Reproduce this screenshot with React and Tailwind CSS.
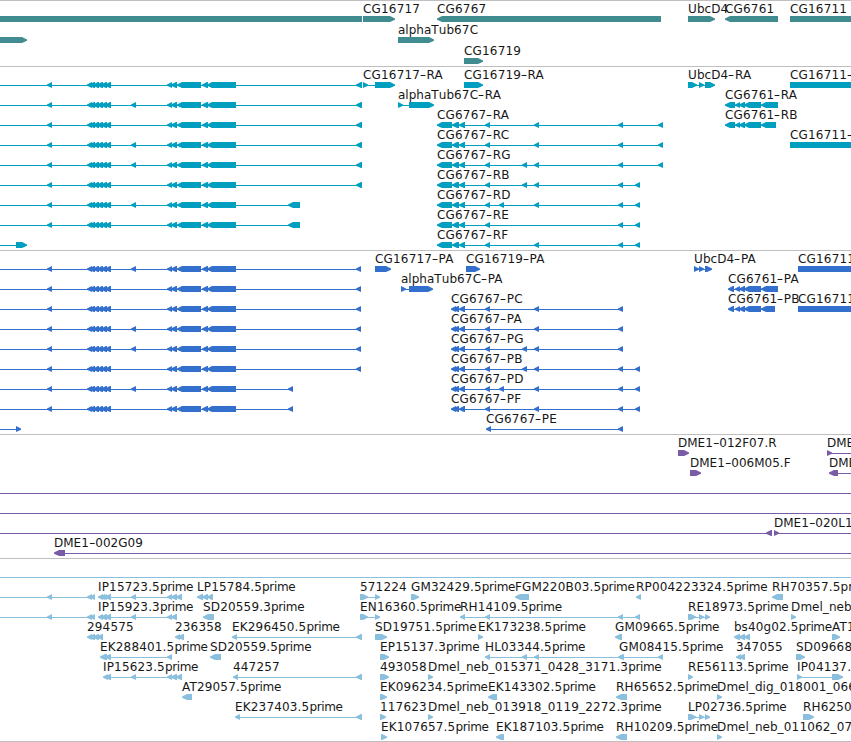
import clsx from "clsx";

// every feature is [direction, exons, label]. exons are [start, end] in px,
// a line is drawn behind them from the first start to the last end
const EDGE = 870;

const intronLine = [-20, EDGE];

// the big gene on the left that runs off the screen
const leftGene = (extraExon, end) => [
    "l",
    [
        [-20, -12], [47, 52],
        [87, 92], [89, 95], [93, 99], [97, 103], [101, 107], [105, 111],
        ...(extraExon ? [[131, 136]] : []),
        [167, 172], [171, 177], [177, 201], [202, 208], [207, 236],
        end,
    ],
];

const cg6767R = (name, rest) => [
    "l",
    [[437, 452], [452, 459], [459, 465], [485, 490], ...rest],
    name,
];

const cg6767P = (name, rest) => [
    "l",
    [[451, 456], [453, 459], [459, 465], [485, 490], ...rest],
    name,
];

const A = [499, 504];
const B = [522, 527];
const C = [534, 539];
const D = [618, 623];
const E = [635, 640];
const F = [658, 663];

const genes = [
    [
        ["l", [[-20, 362]]],
        ["r", [[363, 395]], "CG16717"],
        ["l", [[437, 661]], "CG6767"],
        ["r", [[688, 715]], "UbcD4"],
        ["l", [[725, 778]], "CG6761"],
        ["r", [[790, EDGE]], "CG16711"],
    ],
    [
        ["r", [[-20, 27]]],
        ["r", [[398, 434]], "alphaTub67C"],
    ],
    [["r", [[464, 483]], "CG16719"]],
];

const transcripts = [
    [
        leftGene(false, [356, 362]),
        ["r", [[363, 368], [375, 395]], "CG16717-RA"],
        ["r", [[464, 483]], "CG16719-RA"],
        ["r", [[688, 697], [699, 704], [705, 715]], "UbcD4-RA"],
        ["r", [[790, EDGE]], "CG16711-"],
    ],
    [
        leftGene(true, [356, 362]),
        ["r", [[398, 403], [409, 434]], "alphaTub67C-RA"],
        ["l", [[725, 735], [735, 740], [739, 745], [744, 761], [761, 778]], "CG6761-RA"],
    ],
    [
        leftGene(false, [356, 362]),
        cg6767R("CG6767-RA", [C, D, F]),
        ["l", [[725, 735], [735, 740], [739, 745], [744, 761], [761, 776]], "CG6761-RB"],
    ],
    [
        leftGene(true, [356, 362]),
        cg6767R("CG6767-RC", [C, D, F]),
        ["r", [[790, EDGE]], "CG16711-"],
    ],
    [leftGene(true, [356, 362]), cg6767R("CG6767-RG", [B, C, D, F])],
    [leftGene(false, [356, 362]), cg6767R("CG6767-RB", [B, C, D, E])],
    [leftGene(true, [288, 300]), cg6767R("CG6767-RD", [A, C, D, E])],
    [leftGene(false, [288, 300]), cg6767R("CG6767-RE", [D, E])],
    [
        ["r", [[-20, -12], [16, 27]]],
        cg6767R("CG6767-RF", [C, D, E]),
    ],
];

const proteins = [
    [
        leftGene(true, [356, 361]),
        ["r", [[375, 391]], "CG16717-PA"],
        ["r", [[466, 480]], "CG16719-PA"],
        ["r", [[694, 699], [699, 704], [705, 712]], "UbcD4-PA"],
        ["r", [[798, EDGE]], "CG16711"],
    ],
    [
        leftGene(false, [356, 361]),
        ["r", [[401, 406], [409, 433]], "alphaTub67C-PA"],
        ["l", [[728, 734], [735, 740], [739, 745], [744, 761], [761, 778]], "CG6761-PA"],
    ],
    [
        leftGene(false, [356, 361]),
        cg6767P("CG6767-PC", [C, D]),
        ["l", [[728, 734], [735, 740], [739, 745], [744, 761], [761, 775]], "CG6761-PB"],
        ["r", [[798, EDGE]], "CG16711"],
    ],
    [leftGene(true, [356, 361]), cg6767P("CG6767-PA", [C, D])],
    [leftGene(true, [356, 361]), cg6767P("CG6767-PG", [B, C, D])],
    [leftGene(false, [356, 361]), cg6767P("CG6767-PB", [B, C, D, E])],
    [leftGene(true, [288, 293]), cg6767P("CG6767-PD", [A, C, D, E])],
    [leftGene(false, [288, 293]), cg6767P("CG6767-PF", [C, D, E])],
    [
        ["r", [[-20, -12], [16, 21]]],
        ["l", [[486, 491], D], "CG6767-PE"],
    ],
];

const clones = [
    [
        ["r", [[678, 689]], "DME1-012F07.R"],
        ["r", [[827, 832], [860, EDGE]], "DME"],
    ],
    [
        ["r", [[690, 701]], "DME1-006M05.F"],
        ["l", [[829, 838], [860, EDGE]], "DME"],
    ],
    [["line", [intronLine]]],
    [["line", [intronLine]]],
    [
        ["l", [[-20, -12], [766, 772]]],
        ["r", [[774, 779], [860, EDGE]], "DME1-020L1"],
    ],
    [["l", [[54, 65], [860, EDGE]], "DME1-002G09"]],
];

const ests = [
    [["line", [intronLine]]],
    [
        ["l", [[-20, -12], [47, 52], [87, 92], [90, 95]]],
        ["l", [[98, 103], [100, 105], [102, 107], [105, 111], [131, 136], [167, 172], [171, 177], [176, 182]], "IP15723.5prime"],
        ["l", [[197, 203], [202, 208], [207, 213]], "LP15784.5prime"],
        ["r", [[360, 368], [375, 380]], "571224"],
        ["r", [[411, 419]], "GM32429.5prime"],
        ["l", [[515, 529]], "FGM220B03.5prime"],
        ["l", [[636, 641]], "RP004223324.5prime"],
        ["l", [[772, 783]], "RH70357.5pr"],
    ],
    [
        ["l", [[-20, -12], [47, 52], [87, 92], [90, 95]]],
        ["l", [[98, 103], [101, 107], [105, 111], [131, 136], [167, 172], [171, 177]], "IP15923.3prime"],
        ["l", [[203, 214]], "SD20559.3prime"],
        ["r", [[360, 368], [375, 380]], "EN16360.5prime"],
        ["l", [[460, 465], [485, 490], D, E], "RH14109.5prime"],
        ["r", [[688, 696], [699, 704], [705, 710]], "RE18973.5prime"],
        ["r", [[791, 796]], "Dmel_neb_"],
    ],
    [
        ["l", [[87, 92], [89, 95], [93, 99], [97, 103]], "294575"],
        ["l", [[175, 180], [178, 184]], "236358"],
        ["l", [[232, 237], [356, 362]], "EK296450.5prime"],
        ["r", [[375, 387]], "SD19751.5prime"],
        ["r", [[478, 483]], "EK173238.5prime"],
        ["l", [[615, 622]], "GM09665.5prime"],
        ["l", [[734, 740], [739, 745], [744, 750]], "bs40g02.5prime"],
        ["r", [[832, 840]], "AT1"],
    ],
    [
        ["l", [[100, 107], [105, 111], [167, 172]], "EK288401.5prime"],
        ["l", [[210, 221]], "SD20559.5prime"],
        ["r", [[380, 389]], "EP15137.3prime"],
        ["l", [[485, 490], B, C, D], "HL03344.5prime"],
        ["l", [[619, 624], F], "GM08415.5prime"],
        ["l", [[736, 741], [739, 745]], "347055"],
        ["r", [[796, 805]], "SD09668"],
    ],
    [
        ["l", [[103, 108], [105, 111], [131, 136], [167, 172], [171, 177], [176, 182]], "IP15623.5prime"],
        ["l", [[233, 238], [356, 362]], "447257"],
        ["r", [[380, 389]], "493058"],
        ["r", [[428, 433]], "Dmel_neb_015371_0428_3171.3prime"],
        ["r", [[688, 693]], "RE56113.5prime"],
        ["r", [[797, 802], [832, 843]], "IP04137."],
    ],
    [
        ["l", [[182, 192]], "AT29057.5prime"],
        ["r", [[380, 387]], "EK096234.5prime"],
        ["l", [[488, 497]], "EK143302.5prime"],
        ["l", [[616, 627]], "RH65652.5prime"],
        ["r", [[717, 722]], "Dmel_dig_018001_066"],
    ],
    [
        ["l", [[235, 240], [356, 362]], "EK237403.5prime"],
        ["r", [[380, 386]], "117623"],
        ["r", [[428, 433]], "Dmel_neb_013918_0119_2272.3prime"],
        ["r", [[688, 696], [699, 704], [705, 710]], "LP02736.5prime"],
        ["r", [[803, 814]], "RH6250"],
    ],
    [
        ["r", [[381, 387]], "EK107657.5prime"],
        ["l", [[496, 504]], "EK187103.5prime"],
        ["l", [[616, 627]], "RH10209.5prime"],
        ["r", [[717, 722]], "Dmel_neb_011062_07"],
    ],
];

function Exon({ dir, start, end }) {
    const points =
        dir === "l"
            ? `${start},17.5 ${start + 5},15 ${end},15 ${end},21 ${start + 5},21 ${start},18.7`
            : `${end},17.5 ${end - 5},15 ${start},15 ${start},21 ${end - 5},21 ${end},18.7`;

    return <polygon points={points} />;
}

function Feature({ dir, exons }) {
    const start = exons[0][0];
    const end = exons[exons.length - 1][1];
    const hasLine = dir === "line" || exons.length > 1;

    return (
        <g>
            {hasLine && <rect x={start + 2} y="18" width={end - start - 4} height="1" />}
            {dir !== "line" && exons.map(([from, to]) => (
                <Exon key={from} dir={dir} start={from} end={to} />
            ))}
        </g>
    );
}

// wide hyphens, slightly loose capitals and digits, tight "prime"
function Label({ text, left }) {
    return (
        <span
            className={clsx(
                "absolute top-px whitespace-nowrap text-[12px] leading-[14px] text-neutral-900",
                text.startsWith("DME") ? "tracking-normal" : "tracking-[0.17px]"
            )}
            style={{ left }}
        >
            {text.split(/(-|prime|[a-z]+)/).filter(Boolean).map((part, i) => (
                <span
                    key={i}
                    className={clsx(
                        part === "-" && "inline-block w-[6.5px] scale-x-150 text-center",
                        part === "prime" && "tracking-[-0.35px]",
                        part !== "prime" && /^[a-z]/.test(part) && "tracking-normal"
                    )}
                >
                    {part}
                </span>
            ))}
        </span>
    );
}

function Row({ features, className }) {
    return (
        <div className={clsx("relative", className)}>
            <svg className="block h-[21px] w-full fill-current">
                {features.map(([dir, exons], i) => (
                    <Feature key={i} dir={dir} exons={exons} />
                ))}
            </svg>
            {features.filter((f) => f[2]).map(([, exons, label]) => (
                <Label key={label} text={label} left={exons[0][0]} />
            ))}
        </div>
    );
}

function Track({ rows, className, rowClass = "h-5" }) {
    return (
        <section className={clsx("border-t border-[#bfbfbf]", className)}>
            {rows.map((features, i) => (
                <Row key={i} features={features} className={rowClass} />
            ))}
        </section>
    );
}

function App() {
    return (
        <main className="h-[742px] w-[851px] overflow-hidden bg-white font-['DejaVu_Sans',sans-serif]">
            <Track rows={genes} className="pb-[2px] text-[#408c91]" rowClass="h-[21px]" />
            <Track rows={transcripts} className="pb-[3px] text-[#009fc0]" />
            <Track rows={proteins} className="pb-[3px] text-[#336fcc]" />
            <Track rows={clones} className="pb-[3px] text-[#7a5ba6]" />
            <Track rows={ests} className="border-b pb-[2px] text-[#8abfde]" />
        </main>
    );
}

export default App;
